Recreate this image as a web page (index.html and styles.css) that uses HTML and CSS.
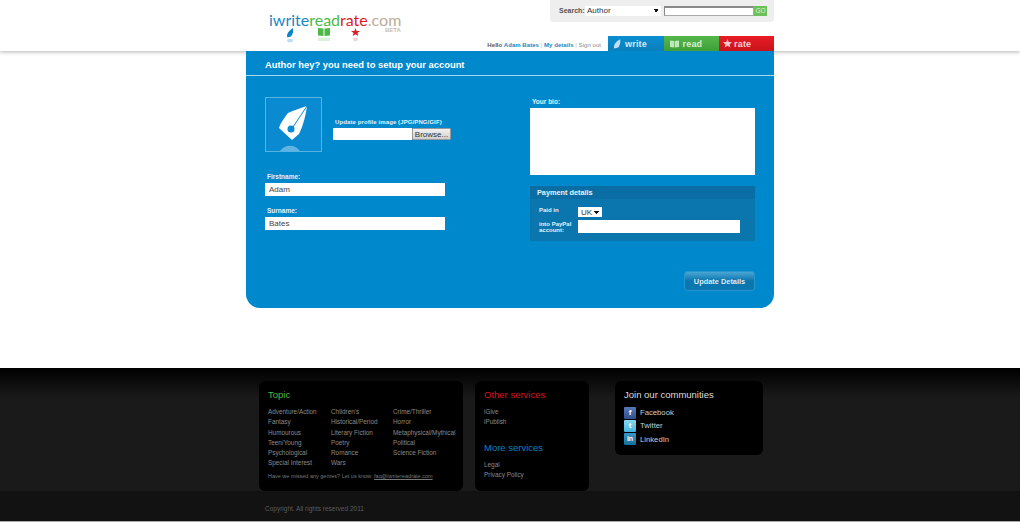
FILE: index.html
```html
<!DOCTYPE html>
<html>
<head>
<meta charset="utf-8">
<title>iwritereadrate.com</title>
<link rel="stylesheet" href="styles.css">
</head>
<body>

<div id="header">
	<div class="wrap head-row">
		<div id="logo">
			<div class="logo-text"><span class="c-write">iwrite</span><span class="c-read">read</span><span class="c-rate">rate</span><span class="c-com">.com</span></div>
			<div class="beta">BETA</div>
			<div class="logo-icons">
				<svg class="icon-pen" width="8" height="15" viewBox="0 0 8 15"><path d="M7 0 C7.500 3 7 6 5 8.500 L1.500 9.500 C0 7 2 3 7 0Z" fill="#0a86c8"/><ellipse cx="4" cy="12.500" rx="3" ry="1.800" fill="#bcdcf0"/></svg>
				<svg class="icon-book" width="12" height="15" viewBox="0 0 12 15"><path d="M0 0 L5.500 .5 V8 L0 7.500Z M6.500 .5 L12 0 V7.500 L6.500 8Z" fill="#4db848"/><path d="M0 9.500 H12 V13 H0Z" fill="#dcf1da"/></svg>
				<svg class="icon-star" width="9" height="15" viewBox="0 0 9 15"><path d="M4.500 0 L5.600 2.900 L9 3 L6.400 5 L7.300 8 L4.500 6.300 L1.700 8 L2.600 5 L0 3 L3.400 2.900Z" fill="#e01b24"/><path d="M1.500 10 H7.500 L6 13 H3Z" fill="#f8d0d2"/></svg>
			</div>
		</div>
		<div id="head-right">
			<div id="search">
				<label class="search-label">Search:</label>
				<select class="search-type"><option>Author</option></select>
				<input type="text" class="search-input">
				<span class="go">GO</span>
			</div>
			<div id="nav">
				<div class="user-links">Hello <a>Adam Bates</a> <i>|</i> <a>My details</a> <i>|</i> <span class="signout">Sign out</span></div>
				<a class="tab tab-write">
					<svg width="8" height="10" viewBox="0 0 10 12"><path d="M9 0 C9.500 4 8.500 8 6.500 10.500 L1.500 11.500 C0 8 3 3 9 0Z" fill="#bfe0f2"/></svg>
					write
				</a>
				<a class="tab tab-read">
					<svg width="9" height="8" viewBox="0 0 14 11"><path d="M0 0 L6.500 1 V11 L0 10Z M7.500 1 L14 0 V10 L7.500 11Z" fill="#bfe6bc"/></svg>
					read
				</a>
				<a class="tab tab-rate">
					<svg width="9" height="9" viewBox="0 0 11 11"><path d="M5.500 0 L7 3.800 L11 4 L8 6.600 L9 10.500 L5.500 8.400 L2 10.500 L3 6.600 L0 4 L4 3.800Z" fill="#f7c9cb"/></svg>
					rate
				</a>
			</div>
		</div>
	</div>
</div>

<div class="wrap" id="panel">
	<h1>Author hey? you need to setup your account</h1>
	<div id="form">
		<div class="col-left">
			<div class="image-row">
				<div class="avatar">
					<svg width="55" height="53" viewBox="0 0 55 53">
						<path d="M41 8 C40 15 38 26 33 36 L26 42 L13 30 C14 26 18 20 22 15 C28 12 35 10 41 8Z" fill="#fff"/>
						<path d="M41 8 L27 29" stroke="#0a8ad0" stroke-width="1"/>
						<circle cx="25" cy="31" r="3.500" fill="#0a8ad0"/>
						<path d="M14 53 C19 46 29 46 34 53Z" fill="#5fb4e4"/>
					</svg>
				</div>
				<div class="upload">
					<label>Update profile image (JPG/PNG/GIF)</label>
					<div class="upload-row">
						<input type="text" class="file-text">
						<button class="browse">Browse...</button>
					</div>
				</div>
			</div>
			<label class="field-label first">Firstname:</label>
			<input type="text" class="text-field" value="Adam">
			<label class="field-label">Surname:</label>
			<input type="text" class="text-field" value="Bates">
		</div>
		<div class="col-right">
			<label class="bio-label">Your bio:</label>
			<textarea class="bio"></textarea>
			<div class="payment">
				<div class="payment-title">Payment details</div>
				<div class="payment-body">
					<div class="pay-row">
						<label class="paid-in">Paid in</label>
						<select class="currency"><option>UK</option></select>
					</div>
					<div class="pay-row">
						<label>into PayPal account:</label>
						<input type="text" class="paypal">
					</div>
				</div>
			</div>
			<div class="actions"><button class="update">Update Details</button></div>
		</div>
	</div>
</div>

<div id="footer">
	<div class="foot-main">
		<div class="foot-inner">
			<div class="box box-topic">
				<h3 class="green">Topic</h3>
				<ul class="topics">
					<li>Adventure/Action</li><li>Children's</li><li>Crime/Thriller</li>
					<li>Fantasy</li><li>Historical/Period</li><li>Horror</li>
					<li>Humourous</li><li>Literary Fiction</li><li>Metaphysical/Mythical</li>
					<li>Teen/Young</li><li>Poetry</li><li>Political</li>
					<li>Psychological</li><li>Romance</li><li>Science Fiction</li>
					<li>Special Interest</li><li>Wars</li>
				</ul>
				<p class="missed">Have we missed any genres? Let us know: <u>faq@iwritereadrate.com</u></p>
			</div>
			<div class="box box-services">
				<h3 class="red">Other services</h3>
				<ul class="links"><li>iGive</li><li>iPublish</li></ul>
				<h3 class="blue more">More services</h3>
				<ul class="links"><li>Legal</li><li>Privacy Policy</li></ul>
			</div>
			<div class="box box-social">
				<h3 class="white">Join our communities</h3>
				<div class="social"><span class="soc fb">f</span>Facebook</div>
				<div class="social"><span class="soc tw">t</span>Twitter</div>
				<div class="social"><span class="soc li">in</span>LinkedIn</div>
			</div>
		</div>
	</div>
	<div class="foot-bottom">
		<div class="wrap copyright">Copyright. All rights reserved 2011</div>
	</div>
</div>

</body>
</html>
```

FILE: styles.css
```css
* {
	box-sizing: border-box;
}

body, h1, h3, ul, li, p {
	margin: 0;
	padding: 0;
}

body {
	background: #fff;
	font-family: "Liberation Sans", Arial, sans-serif;
	font-size: 8px;
	overflow: hidden;
}

ul {
	list-style: none;
}

.wrap {
	width: 528px;
	margin-left: 246px;
}

/* header */
#header {
	height: 51px;
	box-shadow: 0 1px 4px rgba(0,0,0,0.3);
	position: relative;
}

.head-row {
	display: flex;
	justify-content: space-between;
	height: 51px;
}

#logo {
	padding: 10px 0 0 23px;
	width: 160px;
}

.logo-text {
	font-family: Lato, sans-serif;
	font-size: 16px;
	line-height: 20px;
	white-space: nowrap;
}

.c-write { color: #1a87c4; }
.c-read { color: #4db848; }
.c-rate { color: #e01b24; }
.c-com { color: #b9ad96; }

.beta {
	margin: -3px 0 0 116px;
	font-size: 6px;
	line-height: 7px;
	font-weight: bold;
	color: #c9c0b0;
}

.logo-icons {
	display: flex;
	margin: -6px 0 0 17px;
}

.icon-pen { margin-right: 24px; }
.icon-book { margin-right: 21px; }

#head-right {
	display: flex;
	flex-direction: column;
	justify-content: space-between;
	align-items: flex-end;
}

#search {
	width: 224px;
	height: 22px;
	background: #eee;
	border-radius: 0 0 4px 4px;
	display: flex;
	align-items: center;
	padding: 0 7px 1px 9px;
}

.search-label {
	width: 26px;
	font-size: 7px;
	font-weight: bold;
	color: #555;
}

/* select arrow drawn with two gradients */
.search-type, .currency {
	appearance: none;
	border: 0;
	padding: 0 0 0 2px;
	background-color: #fff;
	background-image: linear-gradient(45deg, transparent 50%, #111 50%), linear-gradient(-45deg, transparent 50%, #111 50%);
	background-size: 3px 3px;
	background-repeat: no-repeat;
	font: 8px "Liberation Sans", Arial, sans-serif;
	color: #333;
	border-radius: 0;
}

.search-type {
	width: 76px;
	height: 10px;
	margin-right: 3px;
	background-position: right 5px center, right 2px center;
}

.search-input {
	width: 90px;
	height: 10px;
	border: 1px solid #aaa;
	border-top: 2px solid #888;
	border-left-color: #888;
	background: #fff;
	padding: 0;
}

.go {
	width: 13px;
	height: 10px;
	background: #6cc05a;
	color: #dff2d8;
	font-size: 6.500px;
	line-height: 10px;
	text-align: center;
}

#nav {
	display: flex;
	align-items: flex-end;
}

.user-links {
	font-size: 6px;
	font-weight: bold;
	letter-spacing: 0.05px;
	color: #555;
	margin-right: 7px;
	padding-bottom: 3px;
	white-space: nowrap;
}

.user-links a { color: #1a87c4; }
.user-links i { color: #bbb; font-style: normal; font-weight: normal; }
.signout { color: #888; font-weight: normal; }

.tab {
	display: flex;
	align-items: center;
	gap: 4px;
	width: 55.500px;
	height: 15px;
	padding-left: 5px;
	color: #d5ebf6;
	font-size: 9px;
	font-weight: bold;
	letter-spacing: 0.2px;
}

.tab-write { background: linear-gradient(#0a8fd2, #0a7fba); }
.tab-read { background: linear-gradient(#55b84a, #3f9f3a); color: #d8f0d4; padding-left: 6px; }
.tab-rate { background: linear-gradient(#ea1c26, #c8131c); color: #f8d4d6; width: 55px; gap: 2px; padding-left: 4px; }

/* panel */
#panel {
	background: #0088cc;
	height: 257px;
	border-radius: 0 0 14px 14px;
	position: relative;
}

h1 {
	height: 25px;
	padding: 0 0 0 19px;
	border-bottom: 1px solid #a6d8f0;
	color: #fff;
	font-size: 9.400px;
	line-height: 28px;
}

#form {
	display: flex;
	padding: 21px 19px 0 19px;
}

label {
	display: block;
	color: #e2f2fb;
	font-weight: bold;
	font-size: 6.500px;
}

.col-left {
	width: 265px;
}

.image-row {
	display: flex;
	height: 55px;
}

.avatar {
	width: 57px;
	height: 55px;
	border: 1px solid #58b2e2;
	background: #0a8ad0;
	overflow: hidden;
}

.upload {
	margin-left: 11px;
	padding-top: 21px;
}

.upload label {
	margin-left: 2px;
	font-size: 6px;
	letter-spacing: 0.1px;
	line-height: 9px;
	white-space: nowrap;
}

.upload-row {
	display: flex;
	margin-top: 1px;
}

.file-text {
	width: 79px;
	height: 12px;
	border: 0;
	background: #fff;
}

.browse {
	width: 39px;
	height: 12px;
	padding: 0;
	border: 1px solid #999;
	border-radius: 1px;
	background: linear-gradient(#f2f2f2, #cfcfcf);
	color: #333;
	font: 8px "Liberation Sans", Arial, sans-serif;
}

.field-label {
	margin: 11px 0 0 2px;
	line-height: 7px;
}

.field-label.first {
	margin-top: 21px;
}

.text-field {
	display: block;
	width: 180px;
	height: 13px;
	margin-top: 3px;
	padding: 0 4px;
	border: 0;
	background: #fff;
	color: #444;
	font: 8px "Liberation Sans", Arial, sans-serif;
}

.col-right {
	width: 225px;
}

.bio-label {
	margin: 0 0 2px 2px;
	line-height: 9px;
}

.bio {
	display: block;
	width: 225px;
	height: 67px;
	border: 0;
	background: #fff;
	resize: none;
}

.payment {
	margin-top: 11px;
	height: 55px;
	background: #0b75ae;
}

.payment-title {
	height: 13px;
	padding-left: 7px;
	background: #0a6ea4;
	color: #e6f4fb;
	font-size: 7.300px;
	font-weight: bold;
	line-height: 13px;
}

.payment-body {
	padding: 8px 15px 0 9px;
}

.pay-row {
	display: flex;
	align-items: center;
	margin-bottom: 3px;
}

.pay-row label {
	width: 39px;
	line-height: 6px;
	font-size: 6px;
}

.pay-row .paid-in {
	margin-bottom: 4px;
}

.currency {
	width: 24px;
	height: 10px;
	padding-left: 3px;
	background-position: right 6px center, right 3px center;
}

.paypal {
	width: 162px;
	height: 13px;
	border: 0;
	background: #fff;
}

.actions {
	display: flex;
	justify-content: flex-end;
	margin-top: 30px;
}

.update {
	width: 71px;
	height: 20px;
	padding: 0;
	border: 1px solid #2a95cc;
	border-radius: 3px;
	background: linear-gradient(#4aa6d4, #0a75ad 50%, #0a78b2);
	color: #d8edf8;
	font: bold 7.400px "Liberation Sans", Arial, sans-serif;
}

/* footer */
#footer {
	margin-top: 60px;
}

.foot-main {
	height: 123px;
	background: linear-gradient(#000, #1a1a1a 30px);
	padding-top: 13px;
}

.foot-inner {
	display: flex;
	align-items: flex-start;
	margin-left: 259px;
}

.box {
	background: #000;
	border-radius: 6px;
	color: #8a8a8a;
}

.box-topic {
	width: 204px;
	height: 110px;
	padding: 8px 9px 0;
}

.box-services {
	width: 114px;
	height: 110px;
	margin-left: 12px;
	padding: 8px 9px 0;
}

.box-social {
	width: 148px;
	height: 74px;
	margin-left: 26px;
	padding: 8px 9px 0;
}

h3 {
	font-size: 9.500px;
	font-weight: normal;
	line-height: 12px;
}

.green { color: #4fb848; }
.red { color: #d8141c; }
.blue { color: #0a80c0; }
.white { color: #ddd; }

.topics {
	display: grid;
	grid-template-columns: 63px 62px 1fr;
	margin-top: 6px;
}

.topics li, .links li {
	font-size: 6.400px;
	line-height: 10.300px;
	white-space: nowrap;
}

.links {
	margin-top: 6px;
}

.more {
	margin-top: 14px;
}

.missed {
	margin-top: 3px;
	font-size: 5.500px;
	line-height: 8px;
	color: #777;
	white-space: nowrap;
}

.social {
	display: flex;
	align-items: center;
	gap: 4px;
	height: 13.300px;
	font-size: 7.700px;
	color: #ccc;
}

h3 + .social {
	margin-top: 5px;
}

.soc {
	width: 12px;
	height: 12px;
	border-radius: 1px;
	color: #fff;
	font-weight: bold;
	font-size: 8px;
	line-height: 12px;
	text-align: center;
}

.fb { background: linear-gradient(#5a78b8, #2f4f90); }
.tw { background: linear-gradient(#8ad8f2, #45b4e0); }
.li { background: linear-gradient(#3a98c8, #12709f); font-size: 7px; }

.foot-bottom {
	height: 31px;
	background: #121212;
	border-bottom: 1px solid #aaa;
}

.copyright {
	padding-left: 19px;
	color: #5c5c5c;
	font-size: 6.500px;
	line-height: 36px;
}
```
